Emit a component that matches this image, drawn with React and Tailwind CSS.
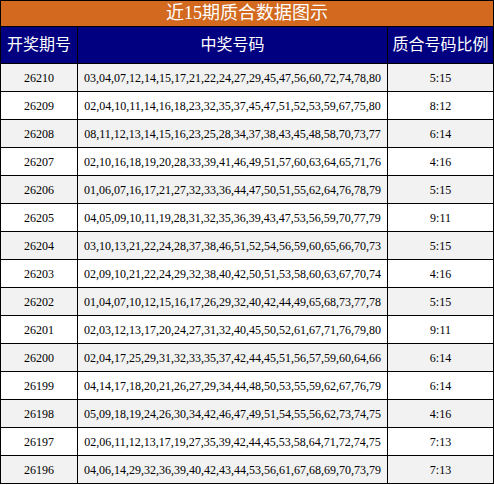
const rows = [
  ['26210', '03,04,07,12,14,15,17,21,22,24,27,29,45,47,56,60,72,74,78,80', '5:15'],
  ['26209', '02,04,10,11,14,16,18,23,32,35,37,45,47,51,52,53,59,67,75,80', '8:12'],
  ['26208', '08,11,12,13,14,15,16,23,25,28,34,37,38,43,45,48,58,70,73,77', '6:14'],
  ['26207', '02,10,16,18,19,20,28,33,39,41,46,49,51,57,60,63,64,65,71,76', '4:16'],
  ['26206', '01,06,07,16,17,21,27,32,33,36,44,47,50,51,55,62,64,76,78,79', '5:15'],
  ['26205', '04,05,09,10,11,19,28,31,32,35,36,39,43,47,53,56,59,70,77,79', '9:11'],
  ['26204', '03,10,13,21,22,24,28,37,38,46,51,52,54,56,59,60,65,66,70,73', '5:15'],
  ['26203', '02,09,10,21,22,24,29,32,38,40,42,50,51,53,58,60,63,67,70,74', '4:16'],
  ['26202', '01,04,07,10,12,15,16,17,26,29,32,40,42,44,49,65,68,73,77,78', '5:15'],
  ['26201', '02,03,12,13,17,20,24,27,31,32,40,45,50,52,61,67,71,76,79,80', '9:11'],
  ['26200', '02,04,17,25,29,31,32,33,35,37,42,44,45,51,56,57,59,60,64,66', '6:14'],
  ['26199', '04,14,17,18,20,21,26,27,29,34,44,48,50,53,55,59,62,67,76,79', '6:14'],
  ['26198', '05,09,18,19,24,26,30,34,42,46,47,49,51,54,55,56,62,73,74,75', '4:16'],
  ['26197', '02,06,11,12,13,17,19,27,35,39,42,44,45,53,58,64,71,72,74,75', '7:13'],
  ['26196', '04,06,14,29,32,36,39,40,42,43,44,53,56,61,67,68,69,70,73,79', '7:13'],
]

const cjk = "font-['Liberation_Serif','Noto_Sans_CJK_SC',serif]"

export default function App() {
  return (
    <div className="w-[494px] h-[485px] bg-white">
      <table className={`w-[494px] border-collapse border border-black text-black ${cjk}`}>
        <thead>
          <tr>
            <th colSpan={3} className="h-[26px] p-0 border border-black bg-[#d2691e] text-white text-[18px] font-normal leading-[25px]">
              近15期质合数据图示
            </th>
          </tr>
          <tr className="bg-[#000080] text-white text-[16px]">
            <th className="w-[77px] h-[37px] p-0 border border-black font-normal">开奖期号</th>
            <th className="h-[37px] p-0 border border-black font-normal">中奖号码</th>
            <th className="w-[106px] h-[37px] p-0 border border-black font-normal">质合号码比例</th>
          </tr>
        </thead>
        <tbody className="text-[12px]">
          {rows.map((r, i) => (
            <tr key={r[0]} className={i % 2 === 0 ? 'bg-[#f2f2f2]' : 'bg-white'}>
              <td className="h-[28px] p-0 border border-black text-center">{r[0]}</td>
              <td className="h-[28px] p-0 border border-black text-center">{r[1]}</td>
              <td className="h-[28px] p-0 border border-black text-center">{r[2]}</td>
            </tr>
          ))}
        </tbody>
      </table>
    </div>
  )
}
